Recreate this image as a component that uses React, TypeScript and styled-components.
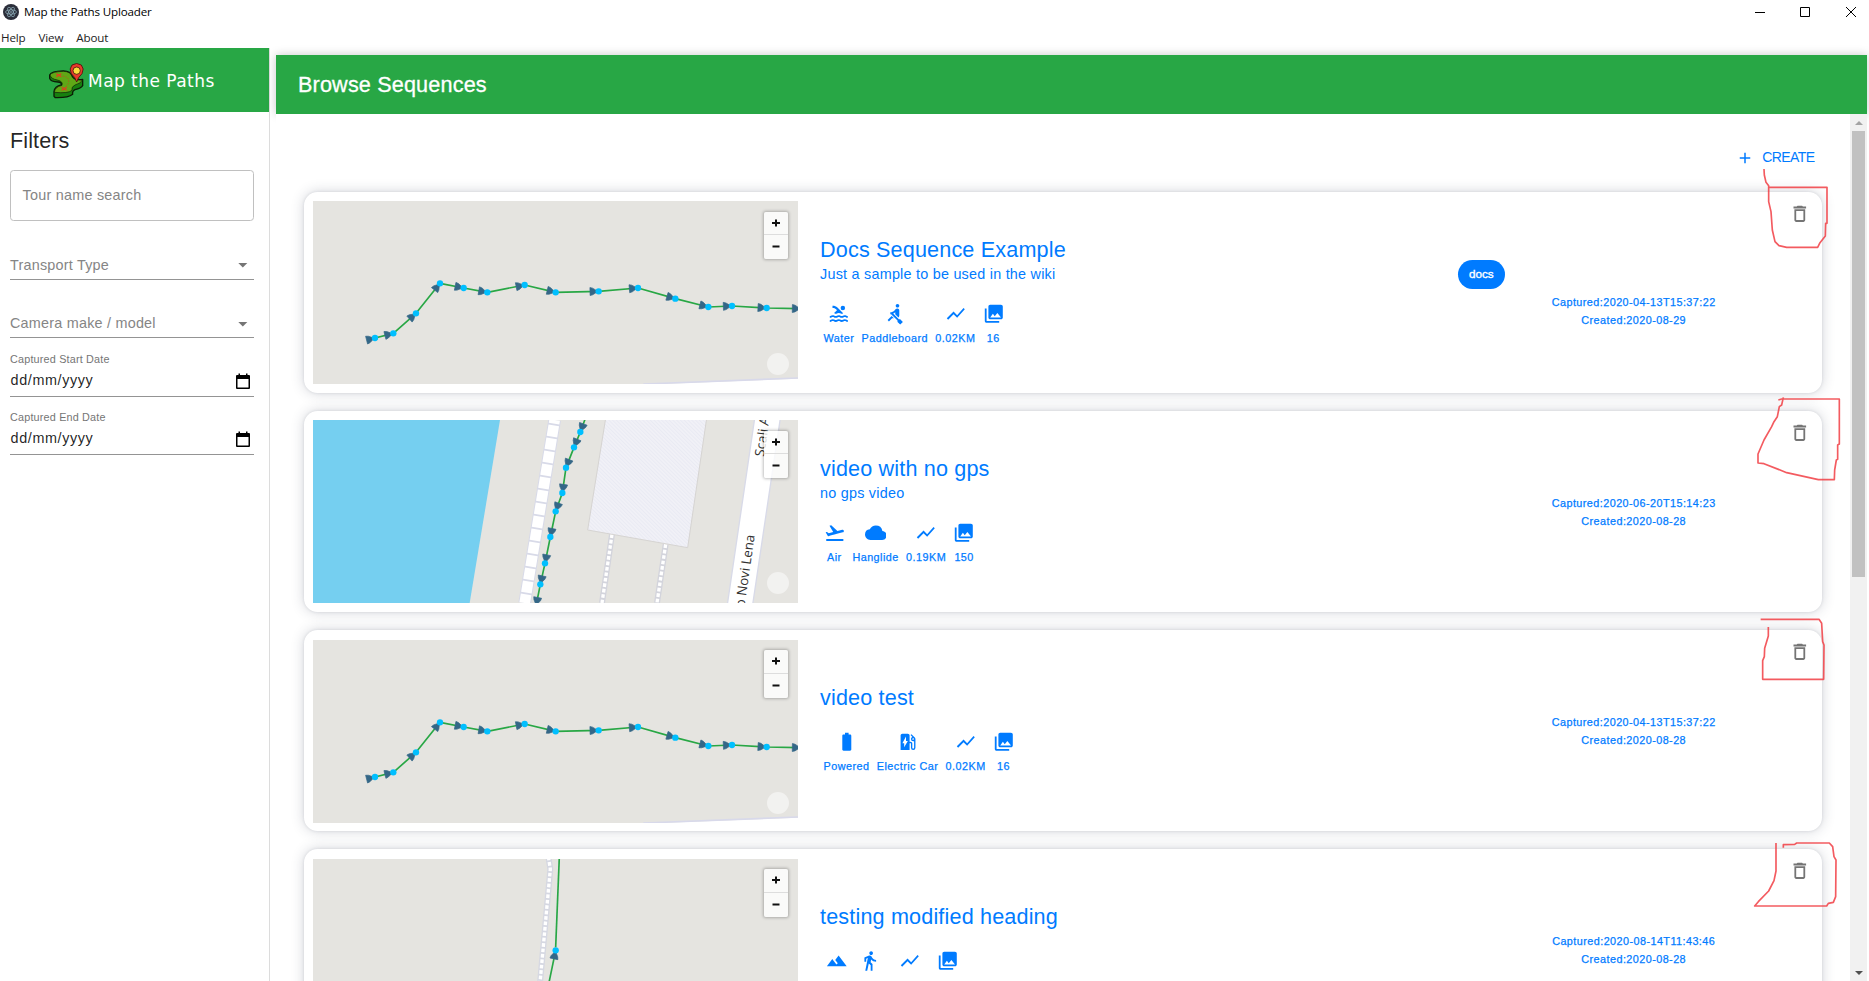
import React from 'react';
import styled, { createGlobalStyle } from 'styled-components';
import {
  MdAdd, MdArrowDropDown, MdBatteryStd, MdCloud, MdDeleteOutline, MdDirectionsWalk, MdEvStation,
  MdFlightTakeoff, MdPhotoLibrary, MdPool, MdRowing, MdShowChart, MdTerrain,
} from 'react-icons/md';
import type { IconType } from 'react-icons';

const GlobalStyle = createGlobalStyle`
  * { box-sizing: border-box; }
  body { margin: 0; background: #fff; font-family: "Liberation Sans", Arial, sans-serif; overflow: hidden; }
`;

const green = '#28a745';
const blue = '#007bff';

const Window = styled.div`
  position: relative;
  display: flex;
  flex-direction: column;
  height: 100vh;
  overflow: hidden;
  background: #fff;
`;

const TitleBar = styled.header`
  display: flex;
  align-items: center;
  height: 24px;
  flex: none;
  padding: 0 13px 0 3px;
  font: 11.6px/24px "Open Sans", sans-serif;
  letter-spacing: -0.16px;
  color: #000;
`;
const AppTitle = styled.span`
  margin-left: 5px;
  flex: 1;
`;
const WindowButtons = styled.div`
  display: flex;
  gap: 35px;
  svg:last-child { margin-left: 1px; }
`;
const MenuBar = styled.nav`
  display: flex;
  gap: 13px;
  height: 24px;
  flex: none;
  padding-left: 1px;
  font: 11.6px/27px "Open Sans", sans-serif;
  letter-spacing: -0.14px;
  color: #222;
`;
const Body = styled.div`
  display: flex;
  flex: 1;
  min-height: 0;
`;

const Sidebar = styled.aside`
  width: 270px;
  flex: none;
  border-right: 1px solid #dcdcdc;
`;
const Brand = styled.div`
  display: flex;
  align-items: center;
  height: 64px;
  padding: 2px 0 0 48px;
  background: ${green};
  color: #fff;
  font: 17px/20px "DejaVu Sans", sans-serif;
  letter-spacing: 0.46px;
`;
const BrandName = styled.span`
  margin: -1px 0 0 3px;
`;
const FilterPanel = styled.div`
  padding: 14px 15px 0 10px;
`;
const FilterTitle = styled.h2`
  margin: 0 0 15px;
  font-size: 21.6px;
  font-weight: 400;
  line-height: 29px;
  letter-spacing: 0.1px;
  color: rgba(0, 0, 0, 0.87);
`;
const SearchBox = styled.div`
  height: 51px;
  margin-bottom: 1px;
  padding: 0 11.5px;
  border: 1px solid #c0c0c0;
  border-radius: 3.6px;
  font-size: 14.4px;
  line-height: 49px;
  letter-spacing: 0.24px;
  color: #858585;
`;
const Field = styled.div`
  display: flex;
  flex-direction: column;
  justify-content: flex-end;
  height: 58.2px;
  padding-bottom: 4px;
  border-bottom: 1px solid #949494;
`;
const FieldCaption = styled.label`
  margin-bottom: 5px;
  font-size: 10.8px;
  line-height: 14px;
  letter-spacing: 0.19px;
  color: #757575;
`;
const FieldRow = styled.div<{ $filled?: boolean }>`
  display: flex;
  align-items: center;
  justify-content: space-between;
  height: ${(p) => (p.$filled ? 21 : 20)}px;
  font-size: 14.4px;
  line-height: 20px;
  letter-spacing: ${(p) => (p.$filled ? 0.6 : 0.22)}px;
  color: ${(p) => (p.$filled ? 'rgba(0,0,0,.87)' : '#858585')};
  svg { color: #757575; flex: none; }
`;

const Main = styled.main`
  display: flex;
  flex-direction: column;
  flex: 1;
  min-width: 0;
  padding: 7px 2px 0 6px;
`;
const PageHeader = styled.div`
  height: 59px;
  flex: none;
  padding-left: 22px;
  background: ${green};
  box-shadow: 0 0 9px rgba(0, 0, 0, 0.22);
  color: #fff;
  font-size: 21.6px;
  line-height: 59px;
  letter-spacing: 0.17px;
  -webkit-text-stroke: 0.3px #fff;
`;
const ScrollArea = styled.div`
  position: relative;
  display: flex;
  flex: 1;
  min-height: 0;
  background: #fff;
`;
const Content = styled.section`
  flex: 1;
  min-width: 0;
  padding: 0 28px;
  overflow: hidden;
`;
const Actions = styled.div`
  display: flex;
  justify-content: flex-end;
  align-items: center;
  height: 78px;
  padding: 9px 7.5px 0 0;
`;
const CreateButton = styled.button`
  display: flex;
  align-items: center;
  gap: 8px;
  padding: 0;
  border: 0;
  background: none;
  color: ${blue};
  font: 14px/20px "Liberation Sans", Arial, sans-serif;
  letter-spacing: -0.6px;
`;
const CreateLabel = styled.span`
  margin-top: -1px;
`;

const Card = styled.article`
  position: relative;
  display: flex;
  height: 201.1px;
  margin-bottom: 18px;
  padding: 9.38px 9px 8.7px;
  border-radius: 13.5px;
  background: #fff;
  box-shadow: 0 0 3px rgba(50, 60, 80, 0.12), 0 0 13px rgba(50, 60, 80, 0.22);
  color: ${blue};
`;
const MapFrame = styled.div`
  position: relative;
  width: 485px;
  height: 183px;
  flex: none;
  overflow: hidden;
  background: #e5e4e0;
  > svg { display: block; }
`;
const ZoomControl = styled.div`
  position: absolute;
  top: 10.5px;
  right: 10px;
  width: 24px;
  border-radius: 2px;
  background: rgba(255, 255, 255, 0.8);
  box-shadow: 0 0 3px 1px rgba(0, 0, 0, 0.25);
  color: #111;
`;
const ZoomButton = styled.div`
  display: flex;
  align-items: center;
  justify-content: center;
  height: 22.5px;
  & + & { height: 25px; border-top: 1px solid #ddd; }
`;
const Attribution = styled.div`
  position: absolute;
  right: 9px;
  bottom: 9px;
  width: 22px;
  height: 22px;
  border-radius: 50%;
  background: rgba(255, 255, 255, 0.5);
`;
const Info = styled.div`
  display: flex;
  flex-direction: column;
  justify-content: center;
  flex: 1;
  padding: 0 0 3px 22px;
`;
const Name = styled.h3`
  margin: 0;
  font-size: 21.6px;
  font-weight: 400;
  line-height: 28.8px;
  letter-spacing: 0.16px;
`;
const Description = styled.p`
  margin: -0.5px 0 0.5px;
  font-size: 14.4px;
  line-height: 20.6px;
  letter-spacing: 0.23px;
`;
const Stats = styled.div`
  display: flex;
  gap: 7.2px;
  margin-top: 18px;
  padding-left: 3.6px;
`;
const Stat = styled.div<{ $width?: number }>`
  display: flex;
  flex-direction: column;
  align-items: center;
  gap: 4px;
  width: ${(p) => (p.$width ? `${p.$width}px` : 'auto')};
  min-height: 43.6px;
  font-size: 10.8px;
  line-height: 18px;
  letter-spacing: 0.48px;
  -webkit-text-stroke: 0.25px ${blue};
  svg { stroke: none; }
`;
const Meta = styled.div`
  display: flex;
  flex-direction: column;
  justify-content: center;
  width: 358.6px;
`;
const Tag = styled.span`
  align-self: flex-start;
  margin: 3.6px;
  padding: 0 11px;
  border-radius: 14.4px;
  background: ${blue};
  color: #fff;
  font-size: 11.7px;
  line-height: 28.8px;
  -webkit-text-stroke: 0.35px #fff;
`;
const Stamp = styled.div`
  text-align: center;
  font-size: 10.8px;
  line-height: 18px;
  letter-spacing: 0.45px;
  -webkit-text-stroke: 0.25px ${blue};
`;
const DeleteButton = styled.div`
  position: absolute;
  top: 11px;
  right: 11px;
  height: 22px;
  color: #757575;
`;

const ScrollTrack = styled.div`
  display: flex;
  flex-direction: column;
  align-items: center;
  justify-content: space-between;
  width: 17px;
  flex: none;
  background: #f1f1f1;
`;
const ScrollThumb = styled.div`
  width: 13px;
  height: 446px;
  background: #c1c1c1;
`;
const ScrollArrow = styled.div`
  display: flex;
  align-items: center;
  justify-content: center;
  height: 17px;
`;
const Markup = styled.svg`
  position: absolute;
  top: 0;
  left: 0;
  pointer-events: none;
`;

type Pt = [number, number];

/** Track line with a heading arrow just before each photo position. */
function Track({ points, start, end }: { points: Pt[]; start?: Pt; end?: Pt }) {
  const all = [...(start ? [start] : []), ...points, ...(end ? [end] : [])];
  const dots = end ? [...points, end] : points;
  return (
    <g>
      <polyline points={all.join(' ')} fill="none" stroke={green} strokeWidth="5" strokeLinejoin="round" />
      {dots.map((p) => {
        const i = all.indexOf(p);
        const a = i > 0 ? all[i - 1] : p;
        const b = i > 0 ? p : all[1];
        const deg = (Math.atan2(b[1] - a[1], b[0] - a[0]) * 180) / Math.PI;
        return (
          <path key={p.join()} d="M-26 -12L-18 -10L-7 -3V3L-18 10L-26 12Z" fill="#346787" stroke="#346787" strokeWidth="2"
            strokeLinejoin="round" transform={`translate(${p[0]} ${p[1]}) rotate(${deg})`} />
        );
      })}
      {points.map((p) => <circle key={p.join()} cx={p[0]} cy={p[1]} r="9.5" fill="#00bfff" />)}
    </g>
  );
}

const coastPoints: Pt[] = [
  [255, 474], [310, 460], [378, 400], [450, 310], [521, 324], [592, 337], [704, 315], [797, 337],
  [926, 334], [1044, 324], [1156, 356], [1255, 381], [1326, 378], [1430, 384],
];

function CoastMap() {
  return (
    <svg width="485" height="183" viewBox="69 63 1455 549">
      <path d="M1060 614L1524 596V614Z" fill="#fff" />
      <path d="M1060 612L1524 594" stroke="#d8d9ea" strokeWidth="5" />
      <Track points={coastPoints} end={[1533, 386]} />
    </svg>
  );
}

function HarbourMap() {
  return (
    <svg width="485" height="183" viewBox="69 60 1455 549">
      <defs>
        <pattern id="hatch" width="8" height="8" patternUnits="userSpaceOnUse" patternTransform="rotate(-45)">
          <rect width="8" height="8" fill="#f1f1f7" />
          <rect width="3" height="8" fill="#e9eaf3" />
        </pattern>
      </defs>
      <path d="M69 60H630L539 609H69Z" fill="#75cff0" />
      <path d="M794 60L704 609" stroke="#d8dae8" strokeWidth="38" />
      <path d="M794 60L704 609" stroke="#fff" strokeWidth="32" strokeDasharray="34 5.5" strokeDashoffset="23" />
      <path d="M966 403L936 609M1127 433L1101 609" stroke="#d3d4dc" strokeWidth="18" />
      <path d="M966 403L936 609M1127 433L1101 609" stroke="#fff" strokeWidth="10" strokeDasharray="11 5.5" />
      <path d="M947 55H1250L1193 443L893 390Z" fill="url(#hatch)" stroke="#d6d4d2" strokeWidth="3" />
      <path d="M1394 55H1471L1388 614H1312Z" fill="#fff" stroke="#d8dae8" strokeWidth="4" />
      <g fontFamily="Open Sans, sans-serif" fontSize="40" fill="#333">
        <text textAnchor="end" transform="translate(1394 406) rotate(-82)">o Novi Lena</text>
        <text transform="translate(1422 171) rotate(-82)">Scali A</text>
      </g>
      <Track
        start={[885, 58]}
        points={[[871, 96], [852, 142], [828, 203], [817, 279], [797, 334], [781, 411], [765, 490], [751, 553]]}
        end={[738, 618]}
      />
    </svg>
  );
}

function TrailMap() {
  return (
    <svg width="485" height="183" viewBox="69 87 1455 549">
      <path d="M775 80L781 117L734 636" fill="none" stroke="#d6d8e2" strokeWidth="18" />
      <path d="M775 80L781 117L734 636" fill="none" stroke="#fff" strokeWidth="10" strokeDasharray="11 5.3" />
      <Track start={[740, 636]} points={[[797, 361]]} />
      <path d="M808 80L797 352" stroke={green} strokeWidth="5" />
    </svg>
  );
}

const maps = { coast: CoastMap, harbour: HarbourMap, trail: TrailMap };

interface Sequence {
  map: keyof typeof maps;
  name: string;
  description?: string;
  stats: { icon: IconType; label?: string; width?: number }[];
  tag?: string;
  captured: string;
  created: string;
}

const sequences: Sequence[] = [
  {
    map: 'coast', name: 'Docs Sequence Example', description: 'Just a sample to be used in the wiki',
    stats: [
      { icon: MdPool, label: 'Water' },
      { icon: MdRowing, label: 'Paddleboard' },
      { icon: MdShowChart, label: '0.02KM' },
      { icon: MdPhotoLibrary, label: '16' },
    ],
    tag: 'docs', captured: '2020-04-13T15:37:22', created: '2020-08-29',
  },
  {
    map: 'harbour', name: 'video with no gps', description: 'no gps video',
    stats: [
      { icon: MdFlightTakeoff, label: 'Air' },
      { icon: MdCloud, label: 'Hanglide' },
      { icon: MdShowChart, label: '0.19KM' },
      { icon: MdPhotoLibrary, label: '150' },
    ],
    captured: '2020-06-20T15:14:23', created: '2020-08-28',
  },
  {
    map: 'coast', name: 'video test',
    stats: [
      { icon: MdBatteryStd, label: 'Powered' },
      { icon: MdEvStation, label: 'Electric Car' },
      { icon: MdShowChart, label: '0.02KM' },
      { icon: MdPhotoLibrary, label: '16' },
    ],
    captured: '2020-04-13T15:37:22', created: '2020-08-28',
  },
  {
    map: 'trail', name: 'testing modified heading',
    stats: [
      { icon: MdTerrain, width: 26 },
      { icon: MdDirectionsWalk, width: 27 },
      { icon: MdShowChart, width: 37 },
      { icon: MdPhotoLibrary, width: 25.6 },
    ],
    captured: '2020-08-14T11:43:46', created: '2020-08-28',
  },
];

function SequenceCard({ seq }: { seq: Sequence }) {
  const Map = maps[seq.map];
  return (
    <Card>
      <MapFrame>
        <Map />
        <ZoomControl>
          <ZoomButton>
            <svg width="8" height="8"><path d="M0 4H8M4 0.5V7.5" stroke="#111" strokeWidth="2" /></svg>
          </ZoomButton>
          <ZoomButton>
            <svg width="8" height="8"><path d="M0.5 3.5H7.5" stroke="#111" strokeWidth="2" /></svg>
          </ZoomButton>
        </ZoomControl>
        <Attribution />
      </MapFrame>
      <Info>
        <Name>{seq.name}</Name>
        {seq.description && <Description>{seq.description}</Description>}
        <Stats>
          {seq.stats.map(({ icon: Icon, label, width }, i) => (
            <Stat key={i} $width={width}><Icon size={21.6} />{label}</Stat>
          ))}
        </Stats>
      </Info>
      <Meta>
        {seq.tag && <Tag>{seq.tag}</Tag>}
        <Stamp>Captured:{seq.captured}</Stamp>
        <Stamp>Created:{seq.created}</Stamp>
      </Meta>
      <DeleteButton><MdDeleteOutline size={21.6} /></DeleteButton>
    </Card>
  );
}

function AppIcon() {
  return (
    <svg width="16" height="16" viewBox="0 0 16 16">
      <circle cx="8" cy="8" r="8" fill="#2b2e3a" />
      <g fill="none" stroke="#9fc3cf" strokeWidth="0.6">
        <ellipse cx="8" cy="8" rx="5.4" ry="2.1" />
        <ellipse cx="8" cy="8" rx="5.4" ry="2.1" transform="rotate(60 8 8)" />
        <ellipse cx="8" cy="8" rx="5.4" ry="2.1" transform="rotate(120 8 8)" />
      </g>
      <circle cx="8" cy="8" r="0.8" fill="#9fc3cf" />
    </svg>
  );
}

function BrandLogo() {
  return (
    <svg width="37" height="37" viewBox="144 186 111 111">
      <path d="M149 222Q153 211 190 210Q212 210 218 228Q224 238 248 235V254Q243 262 225 266Q216 270 218 280Q205 291 166 290L162 286V272Q164 256 184 252Q186 244 174 243Q152 242 149 232Z"
        fill="#17800f" stroke="#0c1c06" strokeWidth="4" strokeLinejoin="round" />
      <path d="M150 222Q155 212 190 211Q212 211 217 229Q223 239 247 237Q244 247 225 252Q213 258 216 268Q205 278 163 274Q164 258 186 253Q190 241 172 237Q153 234 150 222Z"
        fill="#5fa716" stroke="#0c1c06" strokeWidth="2" strokeLinejoin="round" />
      <path d="M188 225Q208 228 206 242Q205 254 194 258" fill="none" stroke="#b8541b" strokeWidth="2.5" strokeDasharray="4 4" />
      <path d="M169 218L184 227M184 218L169 227M185 259L200 268M200 259L185 268" stroke="#e5391f" strokeWidth="3.5" />
      <path d="M230 243Q226 229 214 218Q206 203 216 192Q230 183 244 192Q254 203 246 218Q234 229 230 243Z"
        fill="#e93a2b" stroke="#45110c" strokeWidth="2.5" />
      <circle cx="230" cy="209" r="11" fill="#fbdc3c" stroke="#45110c" strokeWidth="2.5" />
    </svg>
  );
}

function CalendarIcon() {
  return (
    <svg width="14" height="17" viewBox="0 0 14 17">
      <path d="M2.5 0.5H4V2H10V0.5H11.5V2H13Q14 2 14 3V15Q14 16 13 16H1Q0 16 0 15V3Q0 2 1 2H2.5ZM1.5 6V14.5H12.5V6Z" fill="#000" />
    </svg>
  );
}

const CalendarSlot = styled.span`
  display: flex;
  margin: 1px 4px 0 0;
`;
const DateText = styled.span`
  padding: 0 0 2px 0.6px;
`;

function DateField({ caption }: { caption: string }) {
  return (
    <Field>
      <FieldCaption>{caption}</FieldCaption>
      <FieldRow $filled>
        <DateText>dd/mm/yyyy</DateText>
        <CalendarSlot><CalendarIcon /></CalendarSlot>
      </FieldRow>
    </Field>
  );
}

function SelectField({ label }: { label: string }) {
  return (
    <Field>
      <FieldRow>{label}<MdArrowDropDown size={21.6} /></FieldRow>
    </Field>
  );
}

const strokes: { at: string; d: string }[] = [
  {
    at: '1430 130',
    d: 'M1002 117L1003 135L1008 157L1016 167V215L1023 245L1027 300L1035 335L1047 347L1070 352H1163L1170 338L1186 318L1187 280H1191V172H1016',
  },
  {
    at: '1500 390',
    d: 'M850 22L845 45L838 50L832 80L822 95L815 110L792 150L774 192V219L792 221L860 248L955 269H1003L1004 240L1009 210L1013 208V165L1018 162V27H845L835 30',
  },
  {
    at: '1500 390',
    d: 'M782 688H957L965 700L968 755L972 765L971 868H788V812L793 800L794 775L805 738V711',
  },
  {
    at: '1500 690',
    d: 'M828 459V543L822 572L806 603L775 635L764 648H980L985 640L1000 637L1007 620L1008 510L1002 500L998 470L988 459H890L884 463L850 464V473',
  },
];

export default function App() {
  return (
    <Window>
      <GlobalStyle />
      <TitleBar>
        <AppIcon />
        <AppTitle>Map the Paths Uploader</AppTitle>
        <WindowButtons>
          <svg width="10" height="10"><path d="M0 5.5H10" stroke="#000" /></svg>
          <svg width="10" height="10"><path d="M.5 .5H9.5V9.5H.5Z" fill="none" stroke="#000" /></svg>
          <svg width="10" height="10"><path d="M0 0L10 10M10 0L0 10" stroke="#000" /></svg>
        </WindowButtons>
      </TitleBar>
      <MenuBar><span>Help</span><span>View</span><span>About</span></MenuBar>
      <Body>
        <Sidebar>
          <Brand><BrandLogo /><BrandName>Map the Paths</BrandName></Brand>
          <FilterPanel>
            <FilterTitle>Filters</FilterTitle>
            <SearchBox>Tour name search</SearchBox>
            <SelectField label="Transport Type" />
            <SelectField label="Camera make / model" />
            <DateField caption="Captured Start Date" />
            <DateField caption="Captured End Date" />
          </FilterPanel>
        </Sidebar>
        <Main>
          <PageHeader>Browse Sequences</PageHeader>
          <ScrollArea>
            <Content>
              <Actions>
                <CreateButton><MdAdd size={18} /><CreateLabel>CREATE</CreateLabel></CreateButton>
              </Actions>
              {sequences.map((seq) => <SequenceCard key={seq.name} seq={seq} />)}
            </Content>
            <ScrollTrack>
              <div>
                <ScrollArrow>
                  <svg width="8" height="4"><path d="M0 4L4 0L8 4Z" fill="#a3a3a3" /></svg>
                </ScrollArrow>
                <ScrollThumb />
              </div>
              <ScrollArrow>
                <svg width="8" height="4"><path d="M0 0L4 4L8 0Z" fill="#505050" /></svg>
              </ScrollArrow>
            </ScrollTrack>
          </ScrollArea>
        </Main>
      </Body>
      <Markup width="1869" height="981" viewBox="0 0 1869 981">
        {strokes.map((s) => (
          <path key={s.d} d={s.d} transform={`translate(${s.at}) scale(.33333)`} fill="none"
            stroke="#f03238" strokeOpacity="0.8" strokeWidth="5" strokeLinejoin="round" />
        ))}
      </Markup>
    </Window>
  );
}
